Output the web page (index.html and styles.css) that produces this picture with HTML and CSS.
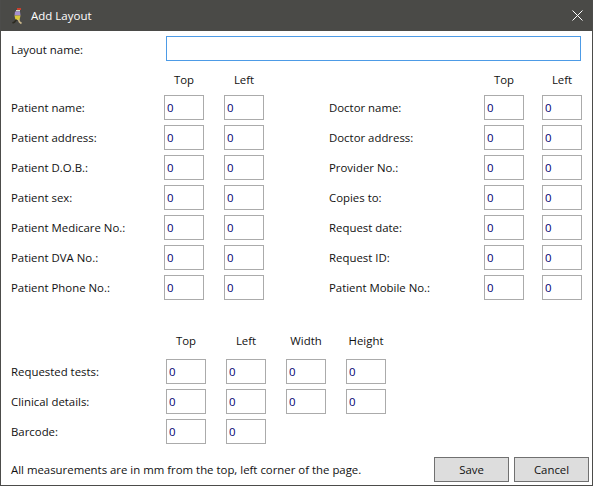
FILE: index.html
```html
<!DOCTYPE html>
<html lang="en">
<head>
    <meta charset="UTF-8">
    <title>Add Layout</title>
    <link rel="stylesheet" href="styles.css">
</head>
<body>

    <div class="window">
        <div class="titlebar">
            <svg class="app-icon" width="16" height="18" viewBox="0 0 16 18">
                <path d="M6 1 h4 v2 h-4 z" fill="#c8402e"/>
                <path d="M5 3 h4 v1.5 h-4 z" fill="#d8e0c8"/>
                <path d="M4 4.5 L9 4.5 L9.5 8.5 L3.5 8.5 Z" fill="#a48fd0"/>
                <path d="M3.5 8.5 L9.5 8.5 L8.5 13 L4.5 13 Z" fill="#d8c83c"/>
                <path d="M5.5 12.5 L3.5 15 L1.5 16" stroke="#2c2a20" stroke-width="1.6" fill="none"/>
                <path d="M7.5 12.5 L8.5 15 L10.5 16.5" stroke="#cdb98c" stroke-width="1.6" fill="none"/>
            </svg>
            <span class="title">Add Layout</span>
            <svg class="close-icon" width="11" height="11" viewBox="0 0 11 11">
                <path d="M0.5 0.5 L10.5 10.5 M10.5 0.5 L0.5 10.5" stroke="#fff" stroke-width="1" fill="none"/>
            </svg>
        </div>

        <div class="content">
            <div class="name-row">
                <label class="name-label">Layout name:</label>
                <input class="name-input" type="text">
            </div>

            <div class="columns">
                <div class="grid grid-left">
                    <span></span><span class="head">Top</span><span class="head">Left</span>
                    <label>Patient name:</label><input value="0"><input value="0">
                    <label>Patient address:</label><input value="0"><input value="0">
                    <label>Patient D.O.B.:</label><input value="0"><input value="0">
                    <label>Patient sex:</label><input value="0"><input value="0">
                    <label>Patient Medicare No.:</label><input value="0"><input value="0">
                    <label>Patient DVA No.:</label><input value="0"><input value="0">
                    <label>Patient Phone No.:</label><input value="0"><input value="0">
                </div>
                <div class="grid grid-right">
                    <span></span><span class="head">Top</span><span class="head">Left</span>
                    <label>Doctor name:</label><input value="0"><input value="0">
                    <label>Doctor address:</label><input value="0"><input value="0">
                    <label>Provider No.:</label><input value="0"><input value="0">
                    <label>Copies to:</label><input value="0"><input value="0">
                    <label>Request date:</label><input value="0"><input value="0">
                    <label>Request ID:</label><input value="0"><input value="0">
                    <label>Patient Mobile No.:</label><input value="0"><input value="0">
                </div>
            </div>

            <div class="grid grid-bottom">
                <span></span><span class="head">Top</span><span class="head">Left</span><span class="head">Width</span><span class="head">Height</span>
                <label>Requested tests:</label><input value="0"><input value="0"><input value="0"><input value="0">
                <label>Clinical details:</label><input value="0"><input value="0"><input value="0"><input value="0">
                <label>Barcode:</label><input value="0"><input value="0">
            </div>

            <div class="footer">
                <span class="note">All measurements are in mm from the top, left corner of the page.</span>
                <button class="btn">Save</button>
                <button class="btn">Cancel</button>
            </div>
        </div>
    </div>

</body>
</html>
```

FILE: styles.css
```css
body {
    margin: 0;
    padding: 0;
    font-family: "Open Sans", sans-serif;
    font-size: 11.4px;
    color: #111111;
    background: white;
}

.window {
    width: 593px;
    height: 486px;
    box-sizing: border-box;
    border: 1px solid #4c4c4a;
    border-top: none;
    display: flex;
    flex-direction: column;
}

.titlebar {
    height: 31px;
    flex: none;
    background-color: #4a4a47;
    color: white;
    display: flex;
    align-items: center;
    padding: 0 8px 0 10px;
}

.app-icon {
    margin: 1px 4px 0 0;
}

.title {
    font-size: 11.5px;
    flex: 1;
}

.close-icon {
    margin-right: 1px;
}

.content {
    flex: 1;
    padding: 5px 0 0 10px;
}

.name-row {
    display: flex;
    align-items: center;
    height: 25px;
}

.name-label {
    width: 155px;
    padding-top: 2px;
}

.name-input {
    width: 415px;
    height: 25px;
    border-color: #4d9be6;
}

input {
    width: 40px;
    height: 25px;
    box-sizing: border-box;
    border: 1px solid #ababab;
    background: white;
    padding: 0 2px;
    margin: 0;
    font-family: inherit;
    font-size: 11.4px;
    color: #000070;
    outline: none;
}

.columns {
    display: flex;
    margin-top: 9px;
}

.grid {
    display: grid;
    grid-auto-rows: 25px;
    row-gap: 5px;
    align-items: center;
}

.grid-left {
    grid-template-columns: 133px 40px 40px;
    column-gap: 20px;
    grid-template-rows: 20px;
}

.grid-right {
    grid-template-columns: 137px 40px 40px;
    column-gap: 18px;
    grid-template-rows: 20px;
    margin-left: 65px;
}

.grid-bottom {
    grid-template-columns: 135px 40px 40px 40px 40px;
    column-gap: 20px;
    grid-template-rows: 24px;
    margin-top: 30px;
}

.head {
    text-align: center;
    padding-bottom: 2px;
}

.grid-bottom .head {
    padding-bottom: 4px;
}

.footer {
    display: flex;
    align-items: center;
    gap: 5px;
    margin-top: 13px;
    height: 25px;
}

.note {
    flex: none;
    width: 418px;
}

.btn {
    flex: none;
    width: 75px;
    height: 25px;
    box-sizing: border-box;
    border: 1px solid #707070;
    background-color: #dddddd;
    font-family: inherit;
    font-size: 11.4px;
    color: #111111;
    padding: 0;
}
```
